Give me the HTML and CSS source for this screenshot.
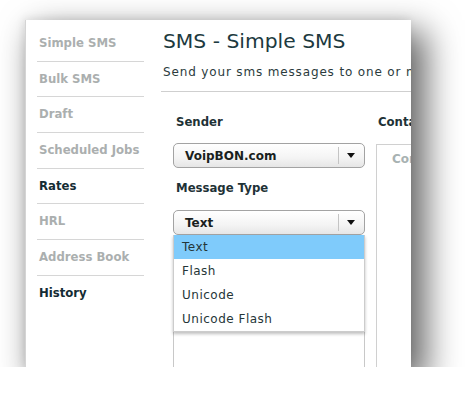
FILE: index.html
```html
<!DOCTYPE html>
<html lang="en">
<head>
    <meta charset="UTF-8">
    <meta name="viewport" content="width=device-width, initial-scale=1.0">
    <title>SMS - Simple SMS</title>
    <link rel="stylesheet" href="styles.css">
</head>
<body>
    <div class="shot">
        <!-- Sidebar -->
        <aside class="sidebar">
            <ul>
                <li><a href="#">Simple SMS</a></li>
                <li><a href="#">Bulk SMS</a></li>
                <li><a href="#">Draft</a></li>
                <li><a href="#">Scheduled Jobs</a></li>
                <li><a href="#" class="dark">Rates</a></li>
                <li><a href="#">HRL</a></li>
                <li><a href="#">Address Book</a></li>
                <li><a href="#" class="dark">History</a></li>
            </ul>
        </aside>

        <!-- Main content -->
        <main class="content">
            <div class="page-head">
                <h1>SMS - Simple SMS</h1>
                <p class="lead">Send your sms messages to one or more recipients</p>
            </div>

            <div class="form">
                <div class="col-left">
                    <div class="label">Sender</div>
                    <div class="select">
                        <span>VoipBON.com</span>
                        <span class="arrow"></span>
                    </div>

                    <div class="label label-type">Message Type</div>
                    <div class="select-wrap">
                        <div class="select">
                            <span>Text</span>
                            <span class="arrow"></span>
                        </div>
                        <ul class="dropdown">
                            <li class="active">Text</li>
                            <li>Flash</li>
                            <li>Unicode</li>
                            <li>Unicode Flash</li>
                        </ul>
                    </div>
                    <div class="textarea"></div>
                </div>

                <div class="col-right">
                    <div class="label">Contacts</div>
                    <div class="contacts-box">Contacts</div>
                </div>
            </div>
        </main>
    </div>
</body>
</html>
```

FILE: styles.css
```css
body {
    margin: 0;
    padding: 0;
    background-color: #ffffff;
    font-family: "DejaVu Sans", Verdana, sans-serif;
}

/* Screenshot card with drop shadow */
.shot {
    margin: 20px 0 0 25px;
    width: 386px;
    height: 347px;
    display: flex;
    overflow: hidden;
    background-color: #ffffff;
    border-left: 1px solid #d4d4d4;
    box-sizing: border-box;
    box-shadow: 12px 14px 32px 3px rgba(0, 0, 0, 0.6), -2px -2px 8px rgba(0, 0, 0, 0.08);
}

/* Sidebar */
.sidebar {
    width: 135px;
    flex-shrink: 0;
    padding: 6px 0 0 11px;
    box-sizing: border-box;
}

.sidebar ul {
    list-style-type: none;
    margin: 0;
    padding: 0;
    width: 107px;
}

.sidebar li {
    padding-top: 10px;
    height: 24.7px;
    border-bottom: 1px solid #d6d6d6;
}

.sidebar li:last-child {
    border-bottom: none;
}

.sidebar a {
    display: block;
    padding-left: 2px;
    font-size: 11.7px;
    line-height: 14px;
    font-weight: bold;
    color: #abafaf;
    text-decoration: none;
    white-space: nowrap;
}

.sidebar a.dark {
    color: #142c34;
}

/* Content */
.content {
    flex: 1;
    min-width: 0;
}

.page-head {
    padding: 9px 0 12px 2px;
    border-bottom: 1px solid #cfcfcf;
}

.page-head h1 {
    margin: 0;
    font-size: 20.3px;
    line-height: 24px;
    font-weight: normal;
    color: #1d3a40;
    white-space: nowrap;
}

.lead {
    margin: 12px 0 0 0;
    font-size: 12px;
    line-height: 14px;
    letter-spacing: 0.85px;
    color: #2b3b3d;
    white-space: nowrap;
}

.form {
    display: flex;
    gap: 11px;
    padding: 23px 0 0 12px;
}

.col-left {
    width: 192px;
    flex-shrink: 0;
}

.col-right {
    flex: 1;
    min-width: 120px;
}

.label {
    padding-left: 3px;
    font-size: 11.7px;
    line-height: 14px;
    font-weight: bold;
    color: #1e3236;
    white-space: nowrap;
}

.col-right .label {
    padding-left: 2px;
}

.label-type {
    margin-top: 13px;
}

/* Fake select boxes */
.select {
    margin-top: 14px;
    height: 25px;
    display: flex;
    align-items: center;
    justify-content: space-between;
    padding-left: 11px;
    border: 1px solid #a3a3a3;
    border-radius: 5px;
    background: linear-gradient(#ffffff, #f4f4f4 60%, #e6e6e6);
    box-sizing: border-box;
    font-size: 12px;
    font-weight: bold;
    color: #1a1f20;
}

.select .arrow {
    position: relative;
    width: 25px;
    height: 17px;
    border-left: 1px solid #c4c4c4;
}

.select .arrow::after {
    content: "";
    position: absolute;
    left: 8px;
    top: 6px;
    border-left: 4px solid transparent;
    border-right: 4px solid transparent;
    border-top: 5px solid #111111;
}

.select-wrap {
    position: relative;
    margin-top: 15px;
}

.select-wrap .select {
    margin-top: 0;
}

.dropdown {
    position: absolute;
    top: 25px;
    left: 0;
    width: 192px;
    margin: 0;
    padding: 0;
    list-style-type: none;
    background-color: #ffffff;
    border: 1px solid #cccccc;
    border-top: none;
    box-sizing: border-box;
    box-shadow: 0 2px 3px rgba(0, 0, 0, 0.25);
    z-index: 10;
}

.dropdown li {
    height: 24px;
    line-height: 24px;
    padding-left: 8px;
    font-size: 12px;
    letter-spacing: 0.5px;
    color: #253638;
}

.dropdown li.active {
    background-color: #7fcbfb;
}

.textarea {
    margin-top: 8px;
    height: 160px;
    border: 1px solid #c8c8c8;
}

.contacts-box {
    margin-top: 15px;
    height: 240px;
    border: 1px solid #d0d0d0;
    padding: 7px 15px;
    font-size: 12px;
    font-weight: bold;
    color: #a8b2b2;
    white-space: nowrap;
}
```
